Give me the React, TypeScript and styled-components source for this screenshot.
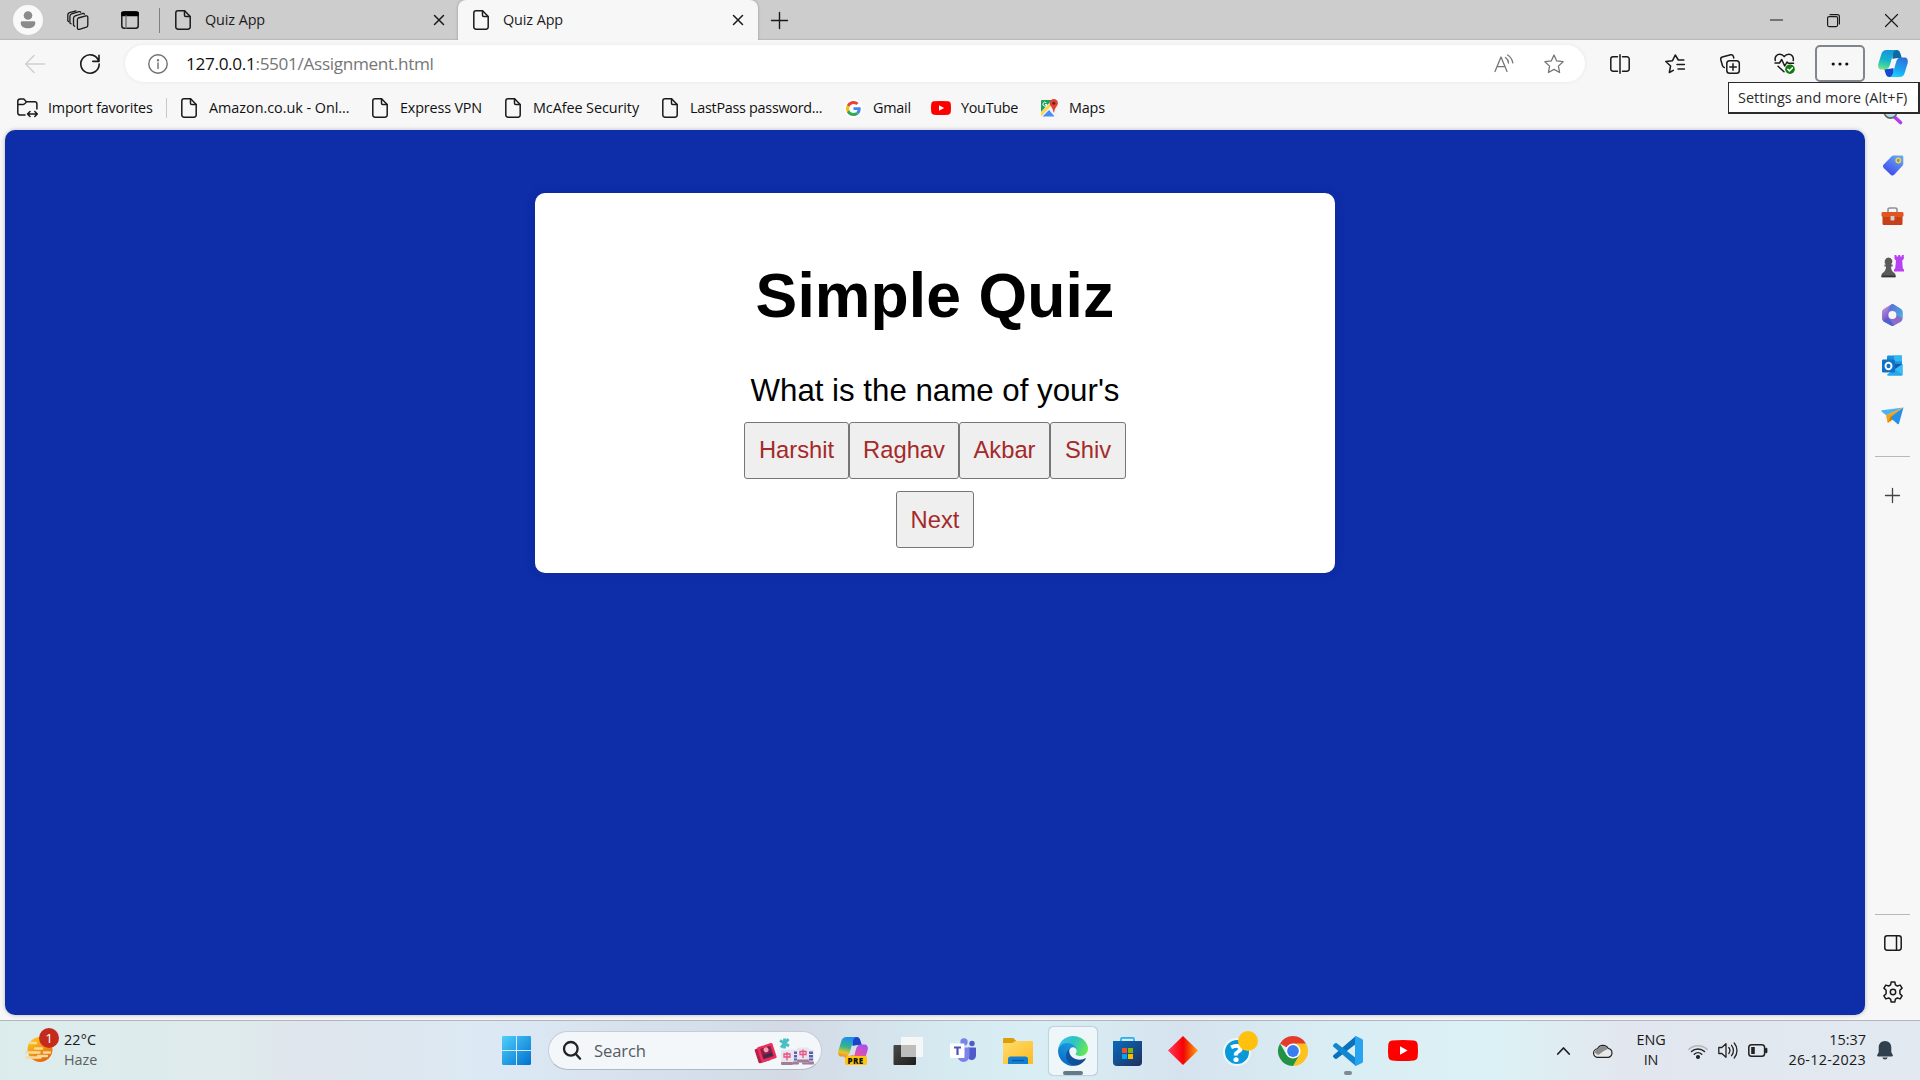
import React from "react";
import styled, { createGlobalStyle } from "styled-components";

const GlobalStyle = createGlobalStyle`
  * { box-sizing: border-box; }
  body { margin: 0; overflow: hidden; background: #f7f7f7; }
  svg { display: block; flex: none; overflow: visible; }
`;

const UI_FONT = `"Open Sans", "Noto Sans", sans-serif`;

/* ---------- shared parts ---------- */

const Screen = styled.div`
  width: 1920px;
  height: 1080px;
  display: flex;
  flex-direction: column;
  background: #f7f7f7;
  font-family: ${UI_FONT};
  font-size: 14.4px;
  color: #1b1b1b;
`;

const Label = styled.span<{ $w?: number; $ls?: number }>`
  display: block;
  flex: none;
  width: ${(p) => (p.$w ? `${p.$w}px` : "auto")};
  letter-spacing: ${(p) => p.$ls ?? -0.2}px;
  line-height: 20px;
  white-space: nowrap;
`;

const Slot = styled.div<{ $w: number }>`
  flex: none;
  width: ${(p) => p.$w}px;
  height: 100%;
  display: flex;
  align-items: center;
  justify-content: center;
`;

const Spacer = styled.div`
  flex: 1;
`;

/* ---------- tab strip ---------- */

const TabStrip = styled.div`
  height: 40px;
  flex: none;
  display: flex;
  align-items: center;
  background: #cdcdcd;
  box-shadow: inset 0 -2px 1px -1px #b9b9b9;
`;

const Avatar = styled.div`
  width: 30px;
  height: 30px;
  border-radius: 50%;
  background: #f9f9f9;
  display: flex;
  align-items: center;
  justify-content: center;
`;

const StripDivider = styled.div`
  width: 1px;
  height: 25px;
  margin-right: 15px;
  background: #808080;
`;

const Tab = styled.div<{ $active?: boolean }>`
  width: ${(p) => (p.$active ? 300 : 283)}px;
  height: 40px;
  padding: 0 ${(p) => (p.$active ? 15 : 14)}px 0 ${(p) => (p.$active ? 15 : 0)}px;
  display: flex;
  align-items: center;
  gap: 14px;
  border-radius: 8px 8px 0 0;
  background: ${(p) => (p.$active ? "#f7f7f7" : "transparent")};
  box-shadow: ${(p) => (p.$active ? "0 0 3px rgba(0,0,0,.28)" : "none")};
  clip-path: inset(0 -4px 0 -4px);
`;

/* ---------- toolbar ---------- */

const Toolbar = styled.div`
  height: 48px;
  flex: none;
  display: flex;
  align-items: center;
  padding: 0 0 1px 10px;
`;

const AddressBar = styled.div`
  width: 1460px;
  height: 37px;
  flex: none;
  margin-left: 5px;
  display: flex;
  align-items: center;
  border-radius: 19px;
  background: #fff;
  box-shadow: 0 0 4px rgba(0, 0, 0, 0.07);
  padding-left: 22px;
`;

const Url = styled(Label)`
  margin-left: 17px;
  font-size: 17.2px;
  line-height: 24px;
  color: #767676;
  b {
    font-weight: 400;
    color: #111;
  }
`;

const MenuButton = styled.div`
  width: 50px;
  height: 37px;
  border: 2px solid #80858e;
  border-radius: 5px;
  display: flex;
  align-items: center;
  justify-content: center;
`;

const MenuWrap = styled.div`
  position: relative;
  margin-left: 3px;
`;

const Tooltip = styled.div`
  position: absolute;
  z-index: 5;
  top: 37px;
  left: -87px;
  width: 192px;
  height: 32px;
  padding: 5px 0 0 9px;
  background: #fff;
  border: 1px solid #2b2b2b;
  border-bottom-width: 2px;
  border-right-width: 2px;
  color: #2b2b2b;
`;

/* ---------- favourites ---------- */

const Favorites = styled.div`
  height: 42px;
  flex: none;
  display: flex;
  align-items: center;
  padding: 0 0 2px 17px;
  color: #111;
`;

const Favorite = styled.div<{ $w: number; $gap?: number }>`
  width: ${(p) => p.$w}px;
  flex: none;
  display: flex;
  align-items: center;
  gap: ${(p) => p.$gap ?? 12}px;
`;

const FavDivider = styled.div`
  width: 1px;
  height: 20px;
  margin-right: 14px;
  background: #c8c8c8;
`;

const FaviconDisc = styled.div`
  width: 19px;
  height: 19px;
  border-radius: 50%;
  background: #fff;
  display: flex;
  align-items: center;
  justify-content: center;
`;

/* ---------- page ---------- */

const Body = styled.div`
  height: 890px;
  flex: none;
  display: flex;
  padding-left: 5px;
`;

const Page = styled.div`
  width: 1860px;
  height: 885px;
  display: flex;
  flex-direction: column;
  align-items: center;
  padding-top: 63px;
  border-radius: 10px;
  background: #0d2da9;
  box-shadow: 0 0 4px rgba(0, 0, 0, 0.25);
  font-family: Arial, "Liberation Sans", sans-serif;
  color: #000;
`;

const Card = styled.div`
  width: 800px;
  height: 380px;
  display: flex;
  flex-direction: column;
  align-items: center;
  border-radius: 10px;
  background: #fff;
  box-shadow: 0 0 12px rgba(0, 0, 0, 0.08);
`;

const Title = styled.h1`
  margin: 66px 0 0;
  font-size: 62.5px;
  line-height: 72px;
  font-weight: 700;
  letter-spacing: 0.1px;
`;

const Question = styled.div`
  margin-top: 42px;
  font-size: 31.25px;
  line-height: 36px;
`;

const Answers = styled.div`
  display: flex;
  margin-top: 13px;
`;

const QuizButton = styled.button<{ $w: number; $drop?: number }>`
  width: ${(p) => p.$w}px;
  height: 57px;
  padding: ${(p) => p.$drop ?? 0}px 0 1px;
  border: 1px solid #767676;
  border-radius: 3px;
  background: #efefef;
  color: #a52a2a;
  font-family: Arial, "Liberation Sans", sans-serif;
  font-size: 23.75px;
`;

const NextRow = styled.div`
  margin-top: 12px;
`;

/* ---------- sidebar ---------- */

const Sidebar = styled.div`
  width: 55px;
  display: flex;
  flex-direction: column;
  align-items: center;
  padding-bottom: 7px;
  margin-top: -40px;
  height: 930px;
`;

const SideItem = styled.div<{ $h?: number }>`
  height: ${(p) => p.$h ?? 50}px;
  width: 55px;
  flex: none;
  display: flex;
  align-items: center;
  justify-content: center;
`;

const SideRule = styled.div<{ $mt?: number }>`
  width: 35px;
  height: 1px;
  flex: none;
  margin-top: ${(p) => p.$mt ?? 0}px;
  background: #b8b8b8;
`;

/* ---------- taskbar ---------- */

const Taskbar = styled.div`
  height: 60px;
  flex: none;
  display: flex;
  align-items: center;
  border-top: 1px solid #b0b6ba;
  background: linear-gradient(
    90deg,
    #dcecec 0,
    #dfeaec 250px,
    #dfe5ec 300px,
    #dce9f4 490px,
    #d5deea 700px,
    #d3dae6 790px,
    #d6eaf1 950px,
    #d9eef4 1040px,
    #d6e3ee 1180px,
    #d9edf4 1330px,
    #dcf1f5 1500px,
    #e2e7ef 1620px,
    #e2e9f1 1920px
  );
`;

const Weather = styled.div`
  width: 488px;
  display: flex;
  align-items: center;
  padding-left: 25px;
  gap: 4px;
`;

const WeatherIcon = styled.div`
  position: relative;
  width: 35px;
  height: 36px;
  margin-top: -10px;
`;

const Badge = styled.span`
  position: absolute;
  left: 14px;
  top: 0;
  width: 20px;
  height: 20px;
  border-radius: 50%;
  background: #c42b1c;
  color: #fff;
  font-size: 13.5px;
  line-height: 20px;
  text-align: center;
`;

const Lines = styled.div<{ $align?: string }>`
  display: flex;
  flex-direction: column;
  align-items: ${(p) => p.$align ?? "flex-start"};
  padding-bottom: 2px;
  color: #1a1a1a;
`;

const Muted = styled(Label)`
  color: #5b6163;
`;

const SearchBox = styled.div`
  width: 274px;
  height: 39px;
  margin-left: 4px;
  margin-right: 3px;
  display: flex;
  align-items: center;
  padding: 0 7px 0 14px;
  border: 1px solid #c4ced9;
  border-bottom-color: #aeb9c4;
  border-radius: 20px;
  background: #f4f7fa;
  font-size: 16.6px;
  color: #555b61;
`;

const SearchText = styled(Label)`
  margin-left: 13px;
`;

const AppSlot = styled.div`
  width: 55px;
  height: 48px;
  flex: none;
  display: flex;
  justify-content: center;
`;

const AppTile = styled.div<{ $active?: boolean }>`
  width: 48px;
  height: 48px;
  display: flex;
  flex-direction: column;
  align-items: center;
  padding-top: 9px;
  border-radius: 5px;
  background: ${(p) => (p.$active ? "#eff6fa" : "transparent")};
  box-shadow: ${(p) => (p.$active ? "0 0 1px 0.5px rgba(130,150,165,.3)" : "none")};
`;

const Indicator = styled.div<{ $w: number }>`
  width: ${(p) => p.$w}px;
  height: 4px;
  margin-top: 5px;
  border-radius: 2px;
  background: ${(p) => (p.$w > 10 ? "#657a88" : "#80898d")};
`;

/* ---------- line icons ---------- */

type LineProps = { w?: number; h?: number; c?: string; s?: number; children: React.ReactNode };
const Line = ({ w = 20, h = 20, c = "#1a1a1a", s = 1.4, children }: LineProps) => (
  <svg width={w} height={h} viewBox={`0 0 ${w} ${h}`} fill="none" stroke={c} strokeWidth={s} strokeLinecap="round" strokeLinejoin="round">
    {children}
  </svg>
);

const PageIcon = () => (
  <Line w={16} h={20} s={1.5}>
    <path d="M3 .8h6.6l5.6 5.7V17a2.2 2.2 0 0 1-2.2 2.2H3A2.2 2.2 0 0 1 .8 17V3A2.2 2.2 0 0 1 3 .8z" />
    <path d="M9.5 1v4.3c0 .8.5 1.3 1.3 1.3H15" />
  </Line>
);

const CloseIcon = ({ size = 10, s = 1.5 }: { size?: number; s?: number }) => (
  <Line w={size} h={size} s={s}>
    <path d={`M.5.5l${size - 1} ${size - 1}M${size - 0.5}.5L.5 ${size - 0.5}`} />
  </Line>
);

const PlusIcon = ({ size = 17, s = 1.4, c }: { size?: number; s?: number; c?: string }) => (
  <Line w={size} h={size} s={s} c={c}>
    <path d={`M${size / 2} .5v${size - 1}M.5 ${size / 2}h${size - 1}`} />
  </Line>
);

const WorkspacesIcon = () => (
  <Line w={22} h={20} s={1.3}>
    <path d="M11.3 8 18.800 5.900c1.200-.3 2 .3 2 1.400v7.900c0 1-.5 1.700-1.400 2l-7 2.100c-1.200.3-2-.3-2-1.400V10c0-1 .3-1.700.9-2z" />
    <path d="m7.700 16.200-1.200-.9V8.200c0-1.200.6-2 1.700-2.400L15.600 3.500c1-.2 1.600 0 1.900.7" />
    <path d="m4 13.800-1.100-.9V6.300c0-1.200.6-2 1.700-2.400L12 1.700c.8-.2 1.400 0 1.700.5M1.500 11.500.8 10.700V5c0-1.200.5-2 1.700-2.400L9 .8" />
  </Line>
);

const TabActionsIcon = () => (
  <Line w={18} h={18} s={1.5}>
    <rect x=".8" y=".8" width="16.400" height="16.400" rx="2.500" />
    <path d="M1 1.500h16v3H1z" fill="#000" stroke="#000" />
    <path d="M5 5v12" stroke="#777" />
  </Line>
);

const BackIcon = () => (
  <Line c="#cfcfcf" s={1.4}>
    <path d="M19.500 10H.8M9 1.500.7 10 9 18.500" />
  </Line>
);

const RefreshIcon = () => (
  <Line s={1.6}>
    <path d="M18.800 7.300A9.200 9.200 0 1 0 19.200 10M19 1.200v6.200h-6.200" />
  </Line>
);

const InfoIcon = () => (
  <Line c="#707070" s={1.4}>
    <circle cx="10" cy="10" r="9.200" />
    <path d="M10 9v5.500" />
    <circle cx="10" cy="6.200" r=".5" fill="#707070" />
  </Line>
);

const ReadAloudIcon = () => (
  <Line c="#757575" s={1.3}>
    <path d="M1 17.500 7 3l6 14.500M3 12.700h8M11.500 3.500c1.800 1.300 2.800 3 3 5.500M13.500 1c3.200 1.800 4.700 4.300 5.300 7.800" />
  </Line>
);

const STAR = "M10 1l2.700 5.900 6.400.8-4.700 4.400 1.200 6.400L10 15.400l-5.600 3.100 1.200-6.400L.9 7.700l6.400-.8z";
const StarIcon = () => (
  <Line c="#757575" s={1.3}>
    <path d={STAR} />
  </Line>
);

const SplitIcon = () => (
  <Line s={1.5}>
    <path d="M7.500 2.800H3A2.200 2.200 0 0 0 .8 5v10A2.200 2.200 0 0 0 3 17.200h4.500M12.500 2.800H17A2.200 2.200 0 0 1 19.200 5v10a2.200 2.200 0 0 1-2.200 2.200h-4.500M10 .8v18.400" />
  </Line>
);

const FavListIcon = () => (
  <Line s={1.5}>
    <path d="M18.800 6h-5.500L10.300 1 7.500 6.700l-6.700.8 4.800 4.500L4.300 18.500l4-2.200M12 10.600h7.400M13 15h6.400" />
  </Line>
);

const CollectionsIcon = () => (
  <Line s={1.5}>
    <rect x="6.800" y="6.800" width="12.500" height="12.500" rx="2.800" />
    <path d="M13 9.800v6.500M9.800 13h6.500M4.300 13.500C3.300 13.300 2.700 12.700 2.500 11.700L.8 5.700c-.3-1.400.3-2.300 1.500-2.700L10.700.8c1.300-.3 2.200.2 2.600 1.500l.5 1.700" />
  </Line>
);

const HealthIcon = () => (
  <Line w={21} h={21} s={1.5}>
    <path d="M1.300 7.500C.3 3.700 3 1.200 5.700 1.200c2 0 3.600 1 4.500 2.500 1-1.500 2.600-2.500 4.600-2.500 2.700 0 5.300 2.500 4.400 6.300M1 10h4.500l2.200-3.500 3 6.500 2.300-4 1.200 1.300h5.300M4 13.200l6 5.500" />
    <circle cx="16" cy="16.200" r="4.800" fill="#107c10" stroke="none" />
    <path d="m13.800 16.300 1.600 1.600 3-3" stroke="#fff" />
  </Line>
);

const DotsIcon = () => (
  <svg width="18" height="4" viewBox="0 0 18 4" fill="#111">
    <circle cx="2.200" cy="2" r="1.600" />
    <circle cx="9" cy="2" r="1.600" />
    <circle cx="15.800" cy="2" r="1.600" />
  </svg>
);

const ImportIcon = () => (
  <Line w={21} h={20} s={1.5}>
    <path d="M8 17H3a2.200 2.200 0 0 1-2.200-2.200V3.500C.8 2 1.700 1 3.200 1h3.600l2.600 2.700h8.200c1.400 0 2.300.8 2.300 2.200v5M.8 6.500h5.400c1.500 0 2-1 3.200-2.700M10.500 16h9.800M13 13.500 10.500 16l2.500 2.500M17.800 13.500l2.500 2.500-2.500 2.500" />
  </Line>
);

/* ---------- colour icons ---------- */

const GoogleG = () => (
  <svg width="15" height="15" viewBox="0 0 48 48">
    <path fill="#EA4335" d="M24 9.500c3.500 0 6.700 1.200 9.200 3.600l6.900-6.900C35.900 2.400 30.500 0 24 0 14.600 0 6.500 5.400 2.600 13.200l8 6.200C12.400 13.700 17.700 9.500 24 9.500z" />
    <path fill="#4285F4" d="M47 24.500c0-1.600-.2-3.100-.4-4.500H24v9h12.900c-.6 3-2.200 5.500-4.700 7.200l7.700 6C44.400 38 47 31.800 47 24.500z" />
    <path fill="#FBBC05" d="M10.500 28.600a14.500 14.500 0 0 1 0-9.200l-8-6.200a24 24 0 0 0 0 21.600z" />
    <path fill="#34A853" d="M24 48c6.500 0 11.900-2.100 15.900-5.800l-7.700-6c-2.200 1.400-4.900 2.300-8.200 2.300-6.300 0-11.600-4.200-13.500-9.900l-8 6.200C6.500 42.600 14.600 48 24 48z" />
  </svg>
);

const YouTubeIcon = ({ w, h }: { w: number; h: number }) => (
  <svg width={w} height={h} viewBox="0 0 30 21" preserveAspectRatio="none">
    <path fill="#f00" d="M4 .5Q15-.5 26 .5q3.400.4 3.700 4 .6 6 0 12-.3 3.600-3.700 4-11 1-22 0-3.400-.4-3.700-4-.6-6 0-12Q.6.900 4 .5z" />
    <path fill="#fff" d="m12 6.200 7.600 4.300L12 14.800z" />
  </svg>
);

const MapsIcon = () => (
  <svg width="18" height="18" viewBox="0 0 18 18">
    <path fill="#1fa15d" d="M1.500 1H12L1 13V2z" />
    <path fill="#f2f2f2" d="M16.500 7v10H13L8 11z" />
    <path fill="#ffd54a" d="m1 13.500 9.500-10 2 2L1.500 17H1z" />
    <path fill="#4d8bf5" d="m9 11 5.500 6.500h-12z" />
    <path fill="#db4437" d="M13.800 0a4.100 4.100 0 0 1 4.100 4.200c0 3-3.300 4-3.700 9h-.8c-.4-5-3.700-6-3.700-9A4.100 4.100 0 0 1 13.800 0z" />
    <circle cx="13.800" cy="4.200" r="1.500" fill="#7b1c13" />
    <path d="M6.300 3.800a2 2 0 1 0 .6 1.700H5" fill="none" stroke="#fff" />
  </svg>
);

const CopilotIcon = ({ rainbow }: { rainbow?: boolean }) => {
  const a = rainbow ? "cpA2" : "cpA1";
  const b = rainbow ? "cpB2" : "cpB1";
  return (
    <svg width="30" height="27" viewBox="0 0 30 27">
      <defs>
        <linearGradient id={a} x1=".5" y1="0" x2=".3" y2="1">
          <stop offset="0" stopColor={rainbow ? "#1c8cf0" : "#1595dc"} />
          <stop offset=".5" stopColor={rainbow ? "#35b58c" : "#16b3cd"} />
          <stop offset=".8" stopColor={rainbow ? "#e8c526" : "#3ed3a0"} />
          <stop offset="1" stopColor={rainbow ? "#f09030" : "#7be08c"} />
        </linearGradient>
        <linearGradient id={b} x1=".7" y1="0" x2=".3" y2="1">
          <stop offset="0" stopColor={rainbow ? "#a84df0" : "#2f6fdc"} />
          <stop offset=".6" stopColor={rainbow ? "#e8549c" : "#1aa5f2"} />
          <stop offset="1" stopColor={rainbow ? "#f58c50" : "#22d0f5"} />
        </linearGradient>
      </defs>
      <path fill={rainbow ? "#1646c8" : "#0b6aa0"} d="M14 0h4.500c2.500 0 3.300 1.500 4 3.800l1.300 4.200H20c-3 0-4.500.8-5.500 1z" />
      <path fill={rainbow ? "#f07048" : "#1648d0"} d="M16 27h-4.500c-2.500 0-3.300-1.500-4-3.800L6.200 19H10c3 0 4.500-.8 5.500-1z" />
      <path fill={`url(#${a})`} d="M8.500 0H18.500c-2 .3-2.800 1.800-3.500 4L12 14.800c-.9 3-2.200 4.700-5 4.700H3.300C.7 19.500-.3 17 .3 14L3.200 4.500C4 1.500 5.500 0 8.500 0z" />
      <path fill={`url(#${b})`} d="M21.500 27h-10c2-.3 2.800-1.800 3.500-4L18 12.200c.9-3 2.200-4.700 5-4.700h3.700c2.600 0 3.600 2.500 3 5.500l-2.900 9.500c-.8 3-2.300 4.500-5.300 4.500z" />
    </svg>
  );
};

const SideSearch = () => (
  <svg width="22" height="22" viewBox="0 0 22 22">
    <path d="m12.500 13 6 5.500" stroke="#b23cf0" strokeWidth="3.600" strokeLinecap="round" />
    <circle cx="8.500" cy="7.500" r="6.500" fill="#b5def6" stroke="#6a6a6a" strokeWidth="1.800" />
  </svg>
);

const TagIcon = () => (
  <svg width="22" height="22" viewBox="0 0 22 22">
    <defs>
      <linearGradient id="tag" x1=".8" y1="0" x2=".2" y2="1">
        <stop offset="0" stopColor="#62a8fa" />
        <stop offset="1" stopColor="#4143e8" />
      </linearGradient>
    </defs>
    <path fill="url(#tag)" d="M11.500 1.500h8.200c1 0 1.600.6 1.600 1.600v6.700c0 .8-.3 1.500-.8 2l-8.300 9c-1 1-2.200 1-3.200.1l-7.300-7c-1-1-1-2.300 0-3.300l8-8.300c.5-.5 1-.8 1.800-.8z" />
    <circle cx="16.300" cy="6.500" r="2.200" fill="#7a86d8" stroke="#f5d52e" strokeWidth="1.600" />
  </svg>
);

const ToolboxIcon = () => (
  <svg width="23" height="18" viewBox="0 0 23 18">
    <path d="M7 5V2.500C7 1.500 7.600 1 9 1h5c1.400 0 2 .5 2 1.500V5" fill="none" stroke="#8b9396" strokeWidth="1.600" />
    <path fill="#c6401a" d="M1.500 9h20v7.500c0 1-.6 1.500-1.600 1.500H3.100c-1 0-1.600-.5-1.600-1.500z" />
    <rect x=".5" y="5" width="22" height="5" rx="1.400" fill="#e2561f" />
    <rect x="9.500" y="9" width="4" height="4.500" rx="1" fill="#c9d1d4" />
  </svg>
);

const ChessIcon = () => (
  <svg width="23" height="24" viewBox="0 0 23 24">
    <path fill="#b640f2" d="M13.500 1h2v1.500h1.700V1h2v1.500h1.600V1h2v4l-1.600 1.500.6 8 1.200 1v2H13v-2l1.200-1 .8-8L13.500 5z" />
    <path fill="#5a5a5a" d="M7.500 3.500a4 4 0 0 1 2.600 7h1.500v2H10c0 2.500.8 4.300 2.200 5.700 1.500.6 2.300 1.600 2.300 3v2H.5v-2c0-1.400.8-2.400 2.300-3C4.200 16.800 5 15 5 12.500H3.500v-2H5a4 4 0 0 1 2.500-7z" />
    <path fill="#353535" d="M.5 21.500h14v1.700H.5z" />
  </svg>
);

const M365Icon = () => (
  <svg width="21" height="22" viewBox="0 0 21 22">
    <defs>
      <linearGradient id="m1" x1="0" y1="0" x2="1" y2="1">
        <stop offset="0" stopColor="#5667d8" />
        <stop offset="1" stopColor="#45b8e8" />
      </linearGradient>
      <linearGradient id="m2" x1="0" y1="0" x2=".5" y2="1">
        <stop offset="0" stopColor="#c8a0e8" />
        <stop offset="1" stopColor="#6b4fc0" />
      </linearGradient>
    </defs>
    <path fill="#8c6bcb" d="M9 .7c1-.5 2-.5 3 0l6.500 4c1.300.8 2 2 2 3.600v6.200c0 1.500-.7 2.700-2 3.500L12 21.500c-1 .5-2 .5-3 0l-6.800-3.700c-1.300-.8-2-2-2-3.500v-6c0-1.600.8-2.800 2.300-3.600z" />
    <path fill="url(#m2)" d="m9 .7-6.500 4C1 5.500.2 6.700.2 8.300v6c0 1.500.8 2.700 2 3.500l4-2V9.500c0-1.600.8-2.800 2-3.600z" />
    <path fill="url(#m1)" d="M9 .7c1-.5 2-.5 3 0l6.500 4c1.300.8 2 2 2 3.600v6.200l-6-3.700-2-4.500H6z" />
    <path fill="#4d63d4" d="M1 16.500c.3.500.7 1 1.200 1.300L9 21.500c1 .5 2 .5 3 0L7 14z" />
    <circle cx="10.400" cy="11" r="4" fill="#f7f7f7" />
  </svg>
);

const OutlookIcon = () => (
  <svg width="21" height="21" viewBox="0 0 21 21">
    <rect x="5" y=".5" width="15" height="13" rx="1.200" fill="#1a8fdc" />
    <path fill="#35b8f1" d="M12 .5h8v6h-8z" />
    <path fill="#0f5fae" d="M6 9h14.500l-7 6z" />
    <path fill="#28a8ea" d="M20.700 9v10.500c0 .7-.5 1.200-1.200 1.200H6.200C5.500 20.700 5 20.200 5 19.500z" />
    <path fill="#50d0ff" d="m13 14 7.700-5v11z" opacity=".5" />
    <rect x="0" y="4.500" width="13" height="13" rx="1.200" fill="#0f72c9" />
    <ellipse cx="6.500" cy="11" rx="3" ry="3.300" fill="none" stroke="#fff" strokeWidth="1.900" />
  </svg>
);

const SendIcon = () => (
  <svg width="23" height="17" viewBox="0 0 23 17">
    <path fill="#4ab3f4" d="M22.500.5 1 3.300c-.8.200-1 .9-.3 1.400l4.500 3.500z" />
    <path fill="#f3a313" d="M22.500.5 5 8.200l1.500 7.300c.1.600.7.700 1 .2l2.800-4.900z" />
    <path fill="#2490ec" d="M22.500.5 9 10.500l7.500 6.400c.7.500 1.300.3 1.500-.5z" />
    <path fill="#c77c0a" d="m7 15.500 3-6 2 3z" />
  </svg>
);

const PanelIcon = () => (
  <Line w={18} h={16} s={1.5}>
    <rect x=".8" y=".8" width="16.400" height="14.400" rx="2.400" />
    <path d="M12.500 1v14" />
  </Line>
);

const GearIcon = () => (
  <Line w={22} h={22} s={1.5}>
    <path d="M9.200 1h3.600l.6 2.900 1.900 1.100 2.900-.9 1.900 3-2.200 2.100v3.600l2.200 2.100-1.900 3-2.900-.9-1.900 1.100-.6 2.900H9.200l-.6-2.900L6.700 17l-2.900.9-1.900-3 2.200-2.100V9.200L1.900 7.100l1.900-3 2.900.9 1.900-1.100z" />
    <circle cx="11" cy="11" r="2.700" />
  </Line>
);

/* ---------- taskbar icons ---------- */

const HazeSun = () => (
  <svg width="35" height="36" viewBox="0 0 35 36">
    <defs>
      <linearGradient id="sun" x1="0" y1="0" x2=".6" y2="1">
        <stop offset="0" stopColor="#ffd21c" />
        <stop offset=".6" stopColor="#f59310" />
        <stop offset="1" stopColor="#e8660c" />
      </linearGradient>
    </defs>
    <circle cx="15" cy="21.500" r="12.500" fill="url(#sun)" />
    <path d="M6 15h5M1.500 24.500h13M10 20.500h7M19 24.500h6M1.500 29.500h14M13 28h9" stroke="#f3dba0" strokeWidth="2.400" strokeLinecap="round" />
  </svg>
);

const StartIcon = () => (
  <svg width="29" height="29" viewBox="0 0 29 29">
    <defs>
      <linearGradient id="win" x1="0" y1="0" x2="1" y2="1">
        <stop offset="0" stopColor="#4fd0fb" />
        <stop offset="1" stopColor="#0070cf" />
      </linearGradient>
    </defs>
    <path fill="url(#win)" d="M1.200 0H14v14H0V1.200C0 .5.5 0 1.200 0zM15 0h12.800c.7 0 1.200.5 1.200 1.200V14H15zM0 15h14v14H1.200C.5 29 0 28.500 0 27.800zM15 15h14v12.800c0 .7-.5 1.200-1.200 1.200H15z" />
  </svg>
);

const SearchGlass = () => (
  <Line w={18} h={19} s={2.3} c="#222">
    <circle cx="7.800" cy="7.800" r="6.800" />
    <path d="m12.800 13 4.300 4.700" />
  </Line>
);

const Tile = ({ x, y, dots }: { x: number; y: number; dots?: boolean }) => (
  <g>
    <rect x={x} y={y} width="12" height="15" rx="1.500" fill="#e6e6f1" />
    <rect x={x} y={y + 12} width="12" height="3" rx="1" fill="#a07c96" />
    {dots ? (
      <path d={`M${x + 9} ${y + 2}v9`} stroke="#5c5fb0" strokeWidth="4" strokeDasharray="2.500 1" />
    ) : (
      <path d={`M${x + 3} ${y + 4}h6v3h-6zM${x + 6} ${y + 2}v8.500`} fill="none" stroke="#ee4f86" strokeWidth="1.300" />
    )}
  </g>
);

const SearchArt = () => (
  <svg width="60" height="28" viewBox="0 0 60 28">
    <g transform="rotate(-18 12 16)">
      <rect x="2" y="9" width="13" height="15" rx="1.500" fill="#b51f45" />
      <rect x="5" y="8" width="16" height="16" rx="1.500" fill="#ee2f5c" />
      <rect x="7.500" y="10.500" width="11" height="11" rx="1" fill="#8a2045" />
      <circle cx="13" cy="13" r="2.500" fill="#f8a0b4" />
      <path d="M8.500 17.500h9v3h-9z" fill="#3a2a55" />
    </g>
    <path d="M26 3.500 35 9M34.500 2 27 10.500M30.500 1.500v10" stroke="#48bfc0" strokeWidth="2.800" />
    <Tile x={33} y={12.5} dots />
    <Tile x={48} y={12.5} dots />
    <Tile x={27} y={13} />
    <Tile x={43} y={10.5} />
  </svg>
);

const PreTag = styled.span`
  position: absolute;
  left: 7px;
  bottom: 1px;
  width: 22px;
  height: 9px;
  border-radius: 2px;
  background: #fdc60a;
  color: #111;
  font-size: 8px;
  font-weight: 800;
  line-height: 9px;
  letter-spacing: 0.3px;
  text-align: center;
`;

const CopilotWrap = styled.div`
  position: relative;
  width: 30px;
  height: 30px;
  padding-top: 1px;
`;

const TaskViewIcon = () => (
  <svg width="30" height="30" viewBox="0 0 30 30">
    <defs>
      <linearGradient id="tv" x1="0" y1="0" x2="1" y2="1">
        <stop offset="0" stopColor="#4a4a48" />
        <stop offset="1" stopColor="#1e1e1e" />
      </linearGradient>
    </defs>
    <rect x=".5" y="9" width="22.500" height="20" rx="1" fill="url(#tv)" />
    <rect x="8" y="1" width="22" height="20" rx="1" fill="#f7f7f7" opacity=".93" />
    <path d="M8 9h15v12H9c-.6 0-1-.4-1-1z" fill="#bdbdbb" />
  </svg>
);

const TeamsIcon = () => (
  <svg width="26" height="30" viewBox="0 0 26 30">
    <circle cx="22" cy="7.500" r="2.700" fill="#5059c9" />
    <circle cx="14" cy="6" r="3.700" fill="#7b83eb" />
    <path fill="#5059c9" d="M18 11.500h7c.6 0 1 .4 1 1V19c0 3-2 5-4.500 5S18 22 18 19z" />
    <path fill="#7b83eb" d="M8 11.500h10.500c.6 0 1 .4 1 1V19c0 4-2.500 7-6 7s-6-3-6-7z" />
    <rect x="0" y="7.500" width="14.500" height="14.500" rx="1" fill="#fff" />
    <path d="M4 11.500h7M7.500 11.500V19" stroke="#4b53bc" strokeWidth="2.200" />
  </svg>
);

const ExplorerIcon = () => (
  <svg width="30" height="30" viewBox="0 0 30 30">
    <defs>
      <linearGradient id="fol" x1="0" y1="0" x2="1" y2="1">
        <stop offset="0" stopColor="#ffdc6e" />
        <stop offset="1" stopColor="#fdbb1e" />
      </linearGradient>
    </defs>
    <path fill="#dd9d08" d="M0 3.300C0 2.500.6 2 1.300 2h9l3 3H28v6H0z" />
    <path fill="url(#fol)" d="M0 7h9.500l3-2H28.700c.8 0 1.300.5 1.300 1.300V28H0z" />
    <path fill="#1480d4" d="M5 28v-5c0-1.500 1-2.500 2.500-2.500h15c1.500 0 2.500 1 2.500 2.500v5z" />
    <path d="M9 24.500h12" stroke="#0a5298" strokeWidth="1.300" />
  </svg>
);

const EdgeIcon = () => (
  <svg width="30" height="30" viewBox="0 0 256 256">
    <defs>
      <linearGradient id="e1" x1="0" y1=".5" x2="1" y2=".6">
        <stop offset="0" stopColor="#0c59a4" />
        <stop offset="1" stopColor="#114a8b" />
      </linearGradient>
      <linearGradient id="e2" x1=".7" y1="0" x2=".2" y2="1">
        <stop offset="0" stopColor="#1b9de2" />
        <stop offset=".5" stopColor="#1584d4" />
        <stop offset="1" stopColor="#0268c4" />
      </linearGradient>
      <linearGradient id="e3" x1="0" y1=".3" x2="1" y2=".6">
        <stop offset="0" stopColor="#35c1f1" />
        <stop offset=".5" stopColor="#2ec4c0" />
        <stop offset="1" stopColor="#66eb4e" />
      </linearGradient>
    </defs>
    <path fill="url(#e1)" d="M231 190.500c-3.400 1.800-6.900 3.400-10.500 4.700a101.500 101.500 0 0 1-35.900 6.500c-47.300 0-88.500-32.500-88.500-74.300 0-11.400 6.400-21.900 16.600-27.300-42.800 1.800-53.800 46.400-53.800 72.500 0 74 68.100 81.400 82.800 81.400 7.900 0 19.800-2.300 27-4.600l1.300-.4a128.300 128.300 0 0 0 66.600-52.800c1.200-1.900.6-4.300-1.200-5.400-1.300-.9-3-1-4.400-.3z" />
    <path fill="url(#e2)" d="M105.700 241.400a79.200 79.200 0 0 1-22.700-21.300A80.700 80.700 0 0 1 112.700 100c3.200-1.500 8.500-4.100 15.600-4 10.100.1 19.700 4.900 25.700 13 4 5.400 6.300 11.900 6.400 18.700 0-.2 24.500-79.600-80-79.600C36.500 48.100.4 89.800.4 126.300c-.2 19.300 4 38.500 12.200 56a128 128 0 0 0 156.400 67 75.500 75.500 0 0 1-63.100-7.900z" />
    <path fill="url(#e3)" d="M152.300 148.900c-.9 1-3.400 2.500-3.400 5.600 0 2.600 1.700 5.200 4.800 7.300 14.300 10 41.400 8.600 41.500 8.600 10.700 0 21.100-2.900 30.300-8.300A61.400 61.400 0 0 0 255.900 109.200c.3-22.400-8-37.300-11.300-43.900C223.500 23.900 177.700 0 128 0 58 0 1 56.200 0 126.200c.5-36.500 36.800-66 80-66 3.500 0 23.500.3 42 10.100 16.300 8.600 24.900 18.900 30.900 29.200 6.200 10.700 7.300 24.100 7.300 29.500 0 5.300-2.700 13.300-7.900 19.900z" />
  </svg>
);

const StoreIcon = () => (
  <svg width="29" height="30" viewBox="0 0 29 30">
    <defs>
      <linearGradient id="st" x1="0" y1="0" x2="1" y2="1">
        <stop offset="0" stopColor="#0a6cbd" />
        <stop offset="1" stopColor="#20305e" />
      </linearGradient>
    </defs>
    <path d="M8 6V3c0-.7.500-1.200 1.200-1.200h10.600c.7 0 1.200.5 1.200 1.200v3" fill="none" stroke="#25b0ee" strokeWidth="1.700" />
    <path fill="url(#st)" d="M0 5h29v21c0 2.500-1.300 4-4 4H4c-2.700 0-4-1.500-4-4z" />
    <path fill="#f25022" d="M9 12h5v5H9z" />
    <path fill="#7fba00" d="M15 12h5v5h-5z" />
    <path fill="#00a4ef" d="M9 18h5v5H9z" />
    <path fill="#ffb900" d="M15 18h5v5h-5z" />
  </svg>
);

const DiamondIcon = () => (
  <svg width="30" height="30" viewBox="0 0 30 30">
    <defs>
      <linearGradient id="di">
        <stop offset="0" stopColor="#ff3a5c" />
        <stop offset=".5" stopColor="#fb0006" />
        <stop offset=".55" stopColor="#f01400" />
        <stop offset="1" stopColor="#ffa412" />
      </linearGradient>
    </defs>
    <path fill="url(#di)" d="m15 0 15 14.500L15 29 0 14.500z" />
  </svg>
);

const HelpWrap = styled.div`
  position: relative;
  width: 28px;
  height: 28px;
  margin: 2px 2px 0 0;
  border-radius: 50%;
  border: 2px solid #eef7fb;
  background: #0a99d8;
  color: #fff;
  font-size: 25px;
  font-weight: 800;
  line-height: 25px;
  text-align: center;
`;

const YellowDot = styled.i`
  position: absolute;
  left: 13px;
  top: -9px;
  width: 20px;
  height: 20px;
  border-radius: 50%;
  background: #ffc10d;
`;

const ChromeIcon = () => (
  <svg width="30" height="30" viewBox="0 0 30 30">
    <path fill="#e33b2e" d="M15 15 2 7.500A15 15 0 0 1 28 7.500z" />
    <path fill="#fcc31e" d="M15 7.500h13A15 15 0 0 1 15 30l6.500-11z" />
    <path fill="#229342" d="M2 7.500A15 15 0 0 0 15 30l6.500-11.200L8.500 18.800z" />
    <circle cx="15" cy="15" r="7.500" fill="#fff" />
    <circle cx="15" cy="15" r="5.900" fill="#3a7df0" />
  </svg>
);

const VSCodeIcon = () => (
  <svg width="30" height="30" viewBox="0 0 30 30">
    <path fill="#0a72bd" d="M22.500.3v8L3.800 22.700c-.5.4-1.200.4-1.700 0L.4 21.200c-.6-.5-.6-1.400 0-1.900z" />
    <path fill="#1287cf" d="M22.500 29.700v-8L3.800 7.300c-.5-.4-1.200-.4-1.700 0L.4 8.800c-.6.5-.6 1.400 0 1.900z" />
    <path fill="#28a3f0" d="M22 .3c.4-.3.900-.3 1.300-.1l5.700 2.700c.6.300 1 .9 1 1.600v21c0 .7-.4 1.300-1 1.600l-5.700 2.700c-.4.200-.9.200-1.300-.1z" />
  </svg>
);

const ChevronUp = () => (
  <Line w={13} h={8} s={1.8} c="#222">
    <path d="m.8 7 5.700-6 5.700 6" />
  </Line>
);

const CloudIcon = () => (
  <svg width="20" height="14" viewBox="0 0 20 14">
    <path fill="#e9e9e9" stroke="#222" strokeWidth="1.200" d="M5 13.300a4.200 4.200 0 0 1-.5-8.400A6 6 0 0 1 15.300 4.500a4.500 4.500 0 0 1 .2 8.800z" />
    <path fill="#8c8c8c" d="M1.500 8.500c.5-2 1.800-3 3.300-3.200A5.500 5.500 0 0 1 14.800 5l-4 2-5.500 4z" />
  </svg>
);

const WifiIcon = () => (
  <Line w={20} h={16} s={1.5} c="#222">
    <path d="M.8 6.500a13 13 0 0 1 18.400 0" stroke="#b3b8bd" />
    <path d="M3.500 8.500a9.500 9.500 0 0 1 13 0M6.300 11.200a5.600 5.600 0 0 1 7.400 0" />
    <circle cx="10" cy="14" r="1.300" fill="#222" />
  </Line>
);

const SpeakerIcon = () => (
  <Line w={20} h={17} s={1.3} c="#222">
    <path d="M.8 5.500h3L8 1.700v13.600l-4.200-3.800h-3z" />
    <path d="M10.800 5.500a5 5 0 0 1 0 6M13.500 3.300a8 8 0 0 1 0 10.400M16.200 1a11.500 11.500 0 0 1 0 15" />
  </Line>
);

const BatteryIcon = () => (
  <Line w={20} h={13} s={1.5} c="#222">
    <rect x=".8" y=".8" width="15.800" height="11.400" rx="2.800" />
    <path d="M3.200 3h3.600v7H3.200z" fill="#222" stroke="none" />
    <path d="M18.200 5v3" strokeWidth="2.400" />
  </Line>
);

const BellIcon = () => (
  <svg width="16" height="19" viewBox="0 0 16 19">
    <path fill="#30404f" d="M8 0c3.700 0 6.300 2.800 6.300 6.300v5l1.500 2.700c.3.700-.1 1.400-.9 1.400H1.100c-.8 0-1.200-.7-.9-1.400l1.500-2.700v-5C1.700 2.800 4.300 0 8 0zM5.300 16.500h5.400a2.800 2.800 0 0 1-5.400 0z" />
  </svg>
);

/* ---------- data ---------- */

const favorites: { label: string; w: number; lw: number; ls?: number; gap?: number; icon: React.ReactNode }[] = [
  { label: "Amazon.co.uk - Onl...", w: 191, lw: 141, ls: -0.03, icon: <PageIcon /> },
  { label: "Express VPN", w: 133, lw: 83, ls: -0.17, icon: <PageIcon /> },
  { label: "McAfee Security", w: 157, lw: 108, ls: -0.08, icon: <PageIcon /> },
  { label: "LastPass password...", w: 182, lw: 133, ls: -0.28, icon: <PageIcon /> },
  { label: "Gmail", w: 87, lw: 39, ls: -0.25, gap: 10, icon: <FaviconDisc><GoogleG /></FaviconDisc> },
  { label: "YouTube", w: 109, lw: 59, ls: -0.3, gap: 10, icon: <YouTubeIcon w={20} h={14} /> },
  { label: "Maps", w: 70, lw: 37, ls: -0.2, gap: 11, icon: <MapsIcon /> },
];

const answers = [
  { text: "Harshit", w: 105 },
  { text: "Raghav", w: 110 },
  { text: "Akbar", w: 91 },
  { text: "Shiv", w: 76 },
];

const apps: { id: string; icon: React.ReactNode; active?: boolean; mark?: number }[] = [
  { id: "copilot", icon: <CopilotWrap><CopilotIcon rainbow /><PreTag>PRE</PreTag></CopilotWrap> },
  { id: "taskview", icon: <TaskViewIcon /> },
  { id: "teams", icon: <TeamsIcon /> },
  { id: "explorer", icon: <ExplorerIcon /> },
  { id: "edge", icon: <EdgeIcon />, active: true, mark: 20 },
  { id: "store", icon: <StoreIcon /> },
  { id: "diamond", icon: <DiamondIcon /> },
  { id: "help", icon: <HelpWrap>?<YellowDot /></HelpWrap> },
  { id: "chrome", icon: <ChromeIcon /> },
  { id: "vscode", icon: <VSCodeIcon />, mark: 8 },
  { id: "youtube", icon: <YouTubeIcon w={30} h={21} /> },
];

const AppGlyph = styled.div`
  height: 30px;
  flex: none;
  display: flex;
  align-items: center;
`;

/* ---------- app ---------- */

export default function App() {
  return (
    <>
      <GlobalStyle />
      <Screen>
        <TabStrip>
          <Slot $w={56}>
            <Avatar>
              <svg width="16" height="18" viewBox="0 0 16 18" fill="#8b8b8b">
                <circle cx="8" cy="4.500" r="4.300" />
                <path d="M2.200 10.300h11.600c1 0 1.500.6 1.500 1.600 0 3.300-3.300 5.300-7.300 5.300S.7 15.200.7 11.900c0-1 .5-1.600 1.500-1.600z" />
              </svg>
            </Avatar>
          </Slot>
          <Slot $w={44}><WorkspacesIcon /></Slot>
          <Slot $w={59}><TabActionsIcon /></Slot>
          <StripDivider />
          <Tab>
            <PageIcon />
            <Label $ls={-0.1}>Quiz App</Label>
            <Spacer />
            <CloseIcon />
          </Tab>
          <Tab $active>
            <PageIcon />
            <Label $ls={-0.1}>Quiz App</Label>
            <Spacer />
            <CloseIcon />
          </Tab>
          <Slot $w={43}><PlusIcon /></Slot>
          <Spacer />
          <Slot $w={57}><Line w={13} h={2} s={1.2}><path d="M.5 1h12" /></Line></Slot>
          <Slot $w={57}>
            <Line w={13} h={13} s={1.2}>
              <rect x=".6" y="2.600" width="10" height="10" rx="1.500" />
              <path d="M3 .6h7.400c1.200 0 2 .8 2 2V10" />
            </Line>
          </Slot>
          <Slot $w={58}><CloseIcon size={13} s={1.2} /></Slot>
        </TabStrip>

        <Toolbar>
          <Slot $w={50}><BackIcon /></Slot>
          <Slot $w={60}><RefreshIcon /></Slot>
          <AddressBar>
            <Slot $w={22}><InfoIcon /></Slot>
            <Url $ls={-0.34}>
              <b>127.0.0.1</b>:5501/Assignment.html
            </Url>
            <Spacer />
            <Slot $w={50}><ReadAloudIcon /></Slot>
            <Slot $w={50}><StarIcon /></Slot>
            <Slot $w={6} />
          </AddressBar>
          <Slot $w={7} />
          <Slot $w={55}><SplitIcon /></Slot>
          <Slot $w={55}><FavListIcon /></Slot>
          <Slot $w={55}><CollectionsIcon /></Slot>
          <Slot $w={55}><HealthIcon /></Slot>
          <MenuWrap>
            <MenuButton><DotsIcon /></MenuButton>
            <Tooltip><Label $ls={0.05}>Settings and more (Alt+F)</Label></Tooltip>
          </MenuWrap>
          <Slot $w={55}><CopilotIcon /></Slot>
        </Toolbar>

        <Favorites>
          <Favorite $w={149} $gap={10}>
            <ImportIcon />
            <Label>Import favorites</Label>
          </Favorite>
          <FavDivider />
          {favorites.map((f) => (
            <Favorite key={f.label} $w={f.w} $gap={f.gap}>
              {f.icon}
              <Label $w={f.lw} $ls={f.ls}>{f.label}</Label>
            </Favorite>
          ))}
        </Favorites>

        <Body>
          <Page>
            <Card>
              <Title>Simple Quiz</Title>
              <Question>What is the name of your's</Question>
              <Answers>
                {answers.map((a) => (
                  <QuizButton key={a.text} $w={a.w}>{a.text}</QuizButton>
                ))}
              </Answers>
              <NextRow>
                <QuizButton $w={78} $drop={2}>Next</QuizButton>
              </NextRow>
            </Card>
          </Page>
          <Sidebar>
            <SideItem><SideSearch /></SideItem>
            <SideItem><TagIcon /></SideItem>
            <SideItem $h={52}><ToolboxIcon /></SideItem>
            <SideItem $h={48}><ChessIcon /></SideItem>
            <SideItem><M365Icon /></SideItem>
            <SideItem><OutlookIcon /></SideItem>
            <SideItem><SendIcon /></SideItem>
            <SideRule $mt={16} />
            <SideItem $h={77}><PlusIcon size={15} s={1.3} c="#444" /></SideItem>
            <Spacer />
            <SideRule />
            <SideItem $h={56}><PanelIcon /></SideItem>
            <SideItem $h={42}><GearIcon /></SideItem>
          </Sidebar>
        </Body>

        <Taskbar>
          <Weather>
            <WeatherIcon>
              <HazeSun />
              <Badge>1</Badge>
            </WeatherIcon>
            <Lines>
              <Label $ls={0.1}>22°C</Label>
              <Muted $ls={0}>Haze</Muted>
            </Lines>
          </Weather>
          <Slot $w={56}><StartIcon /></Slot>
          <SearchBox>
            <SearchGlass />
            <SearchText $ls={-0.1}>Search</SearchText>
            <Spacer />
            <SearchArt />
          </SearchBox>
          {apps.map((a) => (
            <AppSlot key={a.id}>
              <AppTile $active={a.active}>
                <AppGlyph>{a.icon}</AppGlyph>
                {a.mark ? <Indicator $w={a.mark} /> : null}
              </AppTile>
            </AppSlot>
          ))}
          <Spacer />
          <Slot $w={40}><ChevronUp /></Slot>
          <Slot $w={40}><CloudIcon /></Slot>
          <Slot $w={56}>
            <Lines $align="center">
              <Label $ls={-0.1}>ENG</Label>
              <Label>IN</Label>
            </Lines>
          </Slot>
          <Slot $w={4} />
          <Slot $w={30}><WifiIcon /></Slot>
          <Slot $w={30}><SpeakerIcon /></Slot>
          <Slot $w={30}><BatteryIcon /></Slot>
          <Slot $w={93}>
            <Spacer />
            <Lines $align="flex-end">
              <Label $ls={0}>15:37</Label>
              <Label $ls={0.25}>26-12-2023</Label>
            </Lines>
          </Slot>
          <Slot $w={38}><BellIcon /></Slot>
          <Slot $w={16} />
        </Taskbar>
      </Screen>
    </>
  );
}
